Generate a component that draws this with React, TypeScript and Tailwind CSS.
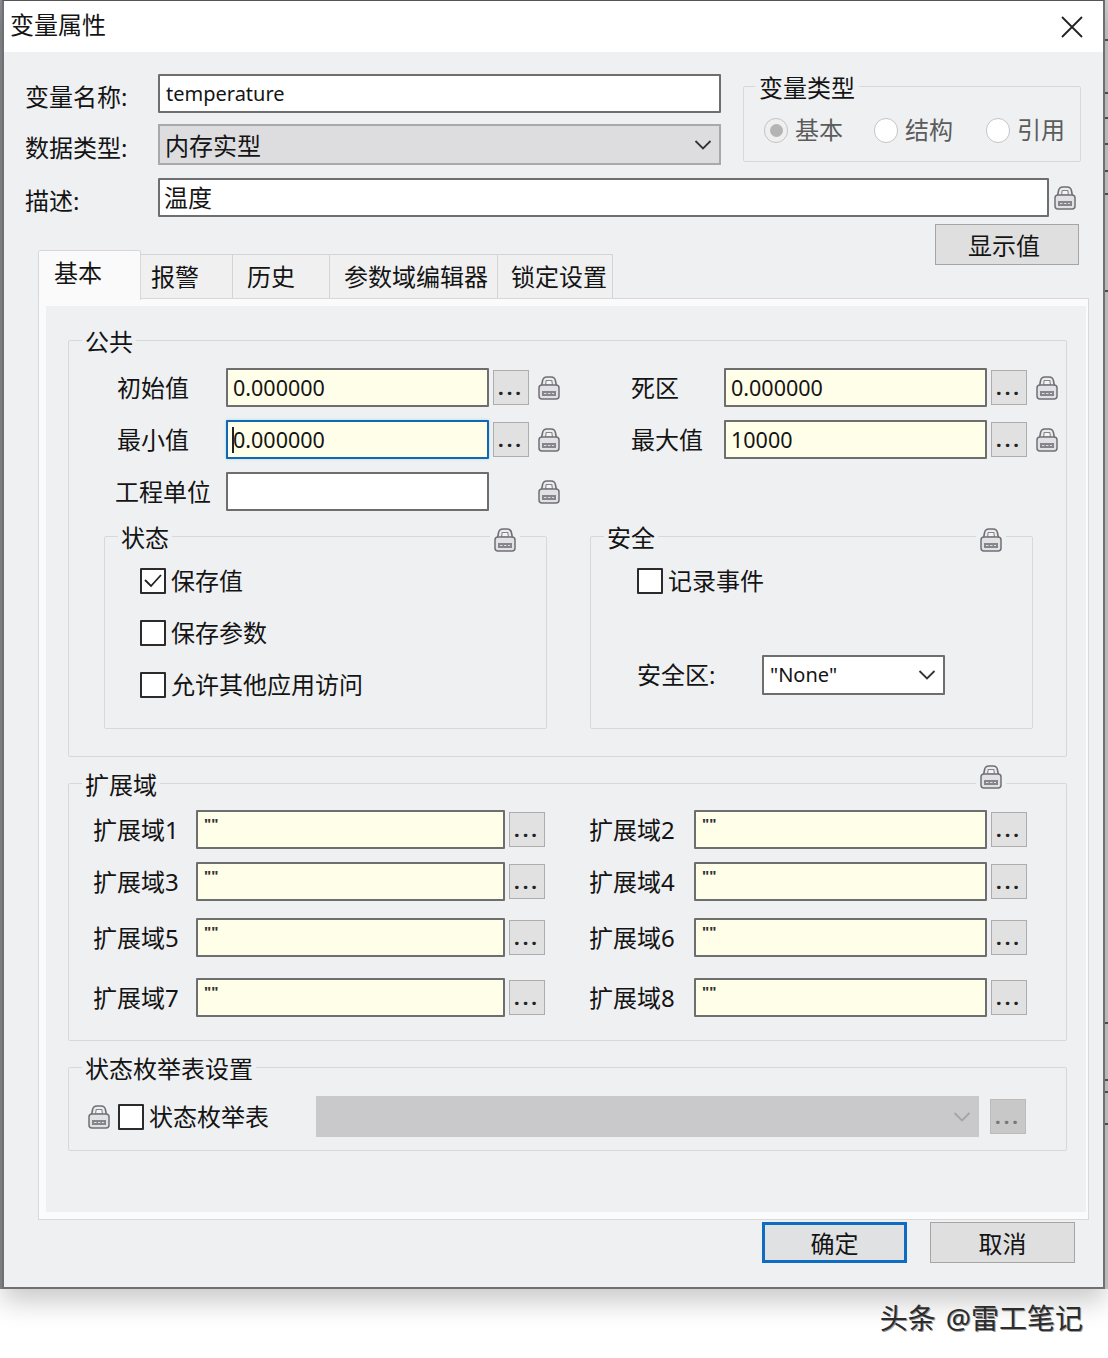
import React from 'react';

function Lock() {
  return (
    <svg width="22" height="24" viewBox="0 0 22 24" className="shrink-0">
      <path d="M3.5 10 L4.5 5 Q5 1 9 1 L13 1 Q17 1 17.5 5 L18.5 10" fill="#ececee" stroke="#6f6f75" strokeWidth="1.6" />
      <path d="M7.5 9 L8.2 4.5 L13.8 4.5 L14.5 9 Z" fill="#f4f4f6" stroke="#85858a" strokeWidth="1.1" />
      <rect x="1" y="9" width="20" height="14" rx="3" fill="#e2e2e6" stroke="#707076" strokeWidth="1.5" />
      <rect x="4" y="15" width="14" height="5" fill="#85858b" />
      <path d="M6 17.5 h2.5 M10 17.5 h2.5 M14 17.5 h2" stroke="#dcdcdf" strokeWidth="1" />
    </svg>
  );
}

function Chevron({ color = '#333' }: { color?: string }) {
  return (
    <svg width="18" height="10" viewBox="0 0 18 10">
      <path d="M1.5 1 L9 8.5 L16.5 1" fill="none" stroke={color} strokeWidth="1.8" />
    </svg>
  );
}

function Dots({ disabled = false }: { disabled?: boolean }) {
  return (
    <div className={`w-9 h-[35px] shrink-0 border flex items-end justify-center pb-2 ${disabled ? 'bg-[#c8c8c8] border-[#bbbbbb] text-[#777]' : 'bg-[#e1e1e1] border-[#adadad] text-[#222]'}`}>
      <span className="text-[20px] leading-[16px] tracking-[3px] font-bold">...</span>
    </div>
  );
}

function YellowInput({ value, w }: { value: string; w: string }) {
  return (
    <div className={`${w} h-[39px] shrink-0 bg-[#fffee8] border-2 border-[#6e6e6e] rounded-[1px] px-[5px] text-[21.5px] leading-[35px]`}>{value}</div>
  );
}

function Quoted({ w }: { w: string }) {
  return (
    <div className={`${w} h-[39px] shrink-0 bg-[#fffee8] border-2 border-[#6e6e6e] rounded-[1px] pl-[6px] text-[15px] leading-[22px] font-bold text-[#333]`}>""</div>
  );
}

function Check({ checked = false }: { checked?: boolean }) {
  return (
    <div className="w-[26px] h-[26px] shrink-0 bg-white border-2 border-[#2b2b2b] rounded-[1px] flex items-center justify-center">
      {checked && (
        <svg width="20" height="16" viewBox="0 0 20 16">
          <path d="M2 7 L8 13 L18 2" fill="none" stroke="#222" strokeWidth="1.8" />
        </svg>
      )}
    </div>
  );
}

function CheckRow({ label, checked = false, className = '' }: { label: string; checked?: boolean; className?: string }) {
  return (
    <div className={`flex items-center leading-[26px] ${className}`}>
      <Check checked={checked} />
      <span className="ml-[5px]">{label}</span>
    </div>
  );
}

function Group({ title, className, children }: { title: string; className: string; children: React.ReactNode }) {
  return (
    <div className={`relative border border-[#d7d8db] rounded-[2px] ${className}`}>
      <div className="absolute left-[13px] -top-[16px] px-[3px] bg-[#eff0f2] leading-[34px] whitespace-nowrap">{title}</div>
      {children}
    </div>
  );
}

function GroupLock({ className }: { className: string }) {
  return (
    <div className={`absolute bg-[#eff0f2] px-1 ${className}`}>
      <Lock />
    </div>
  );
}

function Radio({ label, checked = false, className = '' }: { label: string; checked?: boolean; className?: string }) {
  return (
    <div className={`flex items-center text-[#5c5c5c] ${className}`}>
      <div className={`w-[24px] h-[25px] rounded-full border border-[#c4c4c4] flex items-center justify-center ${checked ? 'bg-[#efefef]' : 'bg-white'}`}>
        {checked && <div className="w-[13px] h-[13px] rounded-full bg-[#b4b4b4]" />}
      </div>
      <span className="ml-[7px]">{label}</span>
    </div>
  );
}

function ExtRow({ left, right, className }: { left: string; right: string; className: string }) {
  return (
    <div className={`flex items-center pl-6 ${className}`}>
      <span className="w-[103px] shrink-0">{left}</span>
      <Quoted w="w-[309px]" />
      <div className="ml-1"><Dots /></div>
      <span className="ml-[44px] w-[105px] shrink-0">{right}</span>
      <Quoted w="w-[293px]" />
      <div className="ml-1"><Dots /></div>
    </div>
  );
}

export default function App() {
  const tabs = [
    { label: '报警', w: 'w-[92px] pl-[10px]' },
    { label: '历史', w: 'w-[97px] pl-[14px]' },
    { label: '参数域编辑器', w: 'w-[168px] pl-[14px]' },
    { label: '锁定设置', w: 'w-[115px] pl-[13px]' },
  ];
  const sideLines = ['mt-[39px]', 'mt-[51px]', 'mt-[23px]', 'mt-[24px]', 'mt-[25px]', 'mt-[21px]', 'mt-[95px]', 'mt-[730px]', 'mt-[55px]', 'mt-[10px]', 'mt-[30px]'];

  return (
    <div className="w-[1108px] h-[1358px] bg-white overflow-hidden text-[24px] text-[#141414] font-['Noto_Sans','Noto_Sans_CJK_SC',sans-serif]">
      <div className="flex items-start">
        <div className="w-[2px] h-[1289px] bg-[#8b8a8c]" />

        {/* Dialog */}
        <div className="relative z-10 w-[1103px] h-[1289px] shrink-0 flex flex-col bg-[#eff0f2] border-x-2 border-b-2 border-t border-x-[#6f6f76] border-b-[#6f6f76] border-t-[#555] shadow-[0_12px_26px_rgba(0,0,0,0.22)]">
          {/* Title bar */}
          <div className="h-[51px] shrink-0 bg-white flex items-center justify-between pl-[6px] pr-[20px]">
            <span className="leading-[40px] -mt-[4px]">变量属性</span>
            <svg width="22" height="22" viewBox="0 0 22 22">
              <path d="M1 1 L21 21 M21 1 L1 21" stroke="#222" strokeWidth="1.8" />
            </svg>
          </div>

          {/* Top form */}
          <div className="flex mt-[22px] pl-[21px]">
            <div className="w-[696px] shrink-0">
              <div className="flex items-center">
                <span className="w-[133px] shrink-0 mt-[6px] leading-[26px]">变量名称:</span>
                <div className="w-[563px] h-[39px] bg-white border-2 border-[#6e6e6e] rounded-[1px] px-[6px] text-[20px] leading-[36px]">temperature</div>
              </div>
              <div className="flex items-center mt-[11px]">
                <span className="w-[133px] shrink-0 mt-[6px] leading-[26px]">数据类型:</span>
                <div className="w-[563px] h-[41px] bg-[#dddde0] border-2 border-[#a9a9a9] flex items-center justify-between pl-[5px] pr-[7px]">
                  <span className="mt-[3px] leading-[26px]">内存实型</span>
                  <Chevron />
                </div>
              </div>
            </div>
            <div className="relative ml-[22px] mt-[12px] w-[338px] h-[76px] border border-[#d7d8db] rounded-[2px] flex items-start pl-5 pt-[30px] leading-[26px]">
              <div className="absolute left-[11px] -top-[16px] px-1 bg-[#eff0f2] leading-[34px]">变量类型</div>
              <Radio label="基本" checked />
              <Radio label="结构" className="ml-[31px]" />
              <Radio label="引用" className="ml-[33px]" />
            </div>
          </div>

          <div className="flex items-center mt-[13px] pl-[21px]">
            <span className="w-[133px] shrink-0 mt-[7px] leading-[26px]">描述:</span>
            <div className="w-[891px] h-[39px] bg-white border-2 border-[#6e6e6e] rounded-[1px] px-[4px] leading-[35px]">温度</div>
            <div className="ml-[5px]"><Lock /></div>
          </div>

          {/* Tabs and the display button */}
          <div className="flex items-start justify-between mt-[7px] ml-[34px] w-[1041px] h-[76px] relative z-10">
            <div className="flex items-end h-full">
              <div className="w-[103px] h-[50px] bg-[#fafafb] border-x border-t border-[#d8d8dc] rounded-t-[2px] pl-[15px] leading-[44px]">基本</div>
              {tabs.map((t) => (
                <div key={t.label} className={`${t.w} h-[44px] mb-[2px] bg-[#f0f0f1] border-r border-t border-[#d4d4d8] flex items-center`}>{t.label}</div>
              ))}
            </div>
            <div className="w-[144px] h-[41px] bg-[#dfdfe0] border border-[#a5a5a5] flex items-center justify-center pr-[6px] pt-[3px] leading-[30px]">显示值</div>
          </div>

          {/* Tab panel */}
          <div className="-mt-[2px] ml-[34px] w-[1051px] h-[922px] shrink-0 border border-[#d8d8dc]">
            <div className="h-full border-l-[7px] border-t-[7px] border-b-[7px] border-r-2 border-[#fbfbfc] pt-[34px] pl-[22px]">
              <Group title="公共" className="w-[999px] h-[417px] pt-[27px]">
                <div className="flex items-center pl-12">
                  <span className="w-[109px] shrink-0">初始值</span>
                  <YellowInput value="0.000000" w="w-[263px]" />
                  <div className="ml-1"><Dots /></div>
                  <div className="ml-[9px]"><Lock /></div>
                  <span className="ml-[71px] w-[93px] shrink-0">死区</span>
                  <YellowInput value="0.000000" w="w-[263px]" />
                  <div className="ml-1"><Dots /></div>
                  <div className="ml-[9px]"><Lock /></div>
                </div>
                <div className="flex items-center pl-12 mt-[13px]">
                  <span className="w-[109px] shrink-0">最小值</span>
                  <div className="relative w-[263px] h-[39px] shrink-0 bg-[#fffee8] border-2 border-[#1168b0] rounded-[1px] px-[5px] text-[21.5px] leading-[35px] shadow-[0_0_3px_#9fdcf5]">
                    0.000000
                    <span className="absolute left-[4px] top-[5px] w-[2px] h-[26px] bg-[#222]" />
                  </div>
                  <div className="ml-1"><Dots /></div>
                  <div className="ml-[9px]"><Lock /></div>
                  <span className="ml-[71px] w-[93px] shrink-0">最大值</span>
                  <YellowInput value="10000" w="w-[263px]" />
                  <div className="ml-1"><Dots /></div>
                  <div className="ml-[9px]"><Lock /></div>
                </div>
                <div className="flex items-center pl-[46px] mt-[13px]">
                  <span className="w-[111px] shrink-0">工程单位</span>
                  <div className="w-[263px] h-[39px] shrink-0 bg-white border-2 border-[#6e6e6e] rounded-[1px]" />
                  <div className="ml-[49px]"><Lock /></div>
                </div>

                <div className="flex mt-[25px] ml-[35px]">
                  <Group title="状态" className="w-[443px] h-[193px] pt-[31px] pl-[35px]">
                    <GroupLock className="right-[26px] -top-[9px]" />
                    <CheckRow label="保存值" checked />
                    <CheckRow label="保存参数" className="mt-[26px]" />
                    <CheckRow label="允许其他应用访问" className="mt-[26px]" />
                  </Group>
                  <Group title="安全" className="ml-[43px] w-[443px] h-[193px] pt-[31px] pl-[46px]">
                    <GroupLock className="right-[26px] -top-[9px]" />
                    <CheckRow label="记录事件" />
                    <div className="flex items-center mt-[61px]">
                      <span className="w-[125px] shrink-0">安全区:</span>
                      <div className="w-[183px] h-[40px] bg-white border-2 border-[#6e6e6e] rounded-[1px] flex items-center justify-between pl-[6px] pr-[7px] text-[20px]">
                        <span>"None"</span>
                        <Chevron />
                      </div>
                    </div>
                  </Group>
                </div>
              </Group>

              <Group title="扩展域" className="mt-[26px] w-[999px] h-[258px] pt-[26px]">
                <GroupLock className="right-[60px] -top-[19px]" />
                <ExtRow left="扩展域1" right="扩展域2" className="" />
                <ExtRow left="扩展域3" right="扩展域4" className="mt-[13px]" />
                <ExtRow left="扩展域5" right="扩展域6" className="mt-[17px]" />
                <ExtRow left="扩展域7" right="扩展域8" className="mt-[21px]" />
              </Group>

              <Group title="状态枚举表设置" className="mt-[26px] w-[999px] h-[84px] pt-[28px]">
                <div className="flex items-center pl-[19px]">
                  <Lock />
                  <div className="ml-2"><Check /></div>
                  <span className="ml-[5px] w-[167px] shrink-0">状态枚举表</span>
                  <div className="w-[663px] h-[41px] bg-[#c9c9cb] flex items-center justify-end pr-[8px]">
                    <Chevron color="#a5a5a5" />
                  </div>
                  <div className="ml-[11px]"><Dots disabled /></div>
                </div>
              </Group>
            </div>
          </div>

          {/* OK / Cancel */}
          <div className="flex justify-end gap-[23px] mt-[2px] w-[1071px]">
            <div className="w-[145px] h-[41px] bg-[#e0e1e3] border-[3px] border-[#0f6cc0] flex items-center justify-center pt-[2px] leading-[30px]">确定</div>
            <div className="w-[145px] h-[41px] bg-[#dfdfe0] border border-[#a5a5a5] flex items-center justify-center pt-[2px] leading-[30px]">取消</div>
          </div>
        </div>

        {/* Window behind the dialog, right edge */}
        <div className="flex-1 h-[1289px] bg-[#cfcccc]">
          {sideLines.map((m, i) => (
            <div key={i} className={`${m} h-[2px] bg-[#55555a]`} />
          ))}
        </div>
      </div>

      {/* Watermark */}
      <div className="relative z-20 flex justify-end mt-[10px] pr-[25px] text-[28px] leading-[38px] text-[#2c2c2c] [text-shadow:1px_1px_0_#9a9a9a]">
        <span>头条</span>
        <span className="ml-[10px]">@雷工笔记</span>
      </div>
    </div>
  );
}
